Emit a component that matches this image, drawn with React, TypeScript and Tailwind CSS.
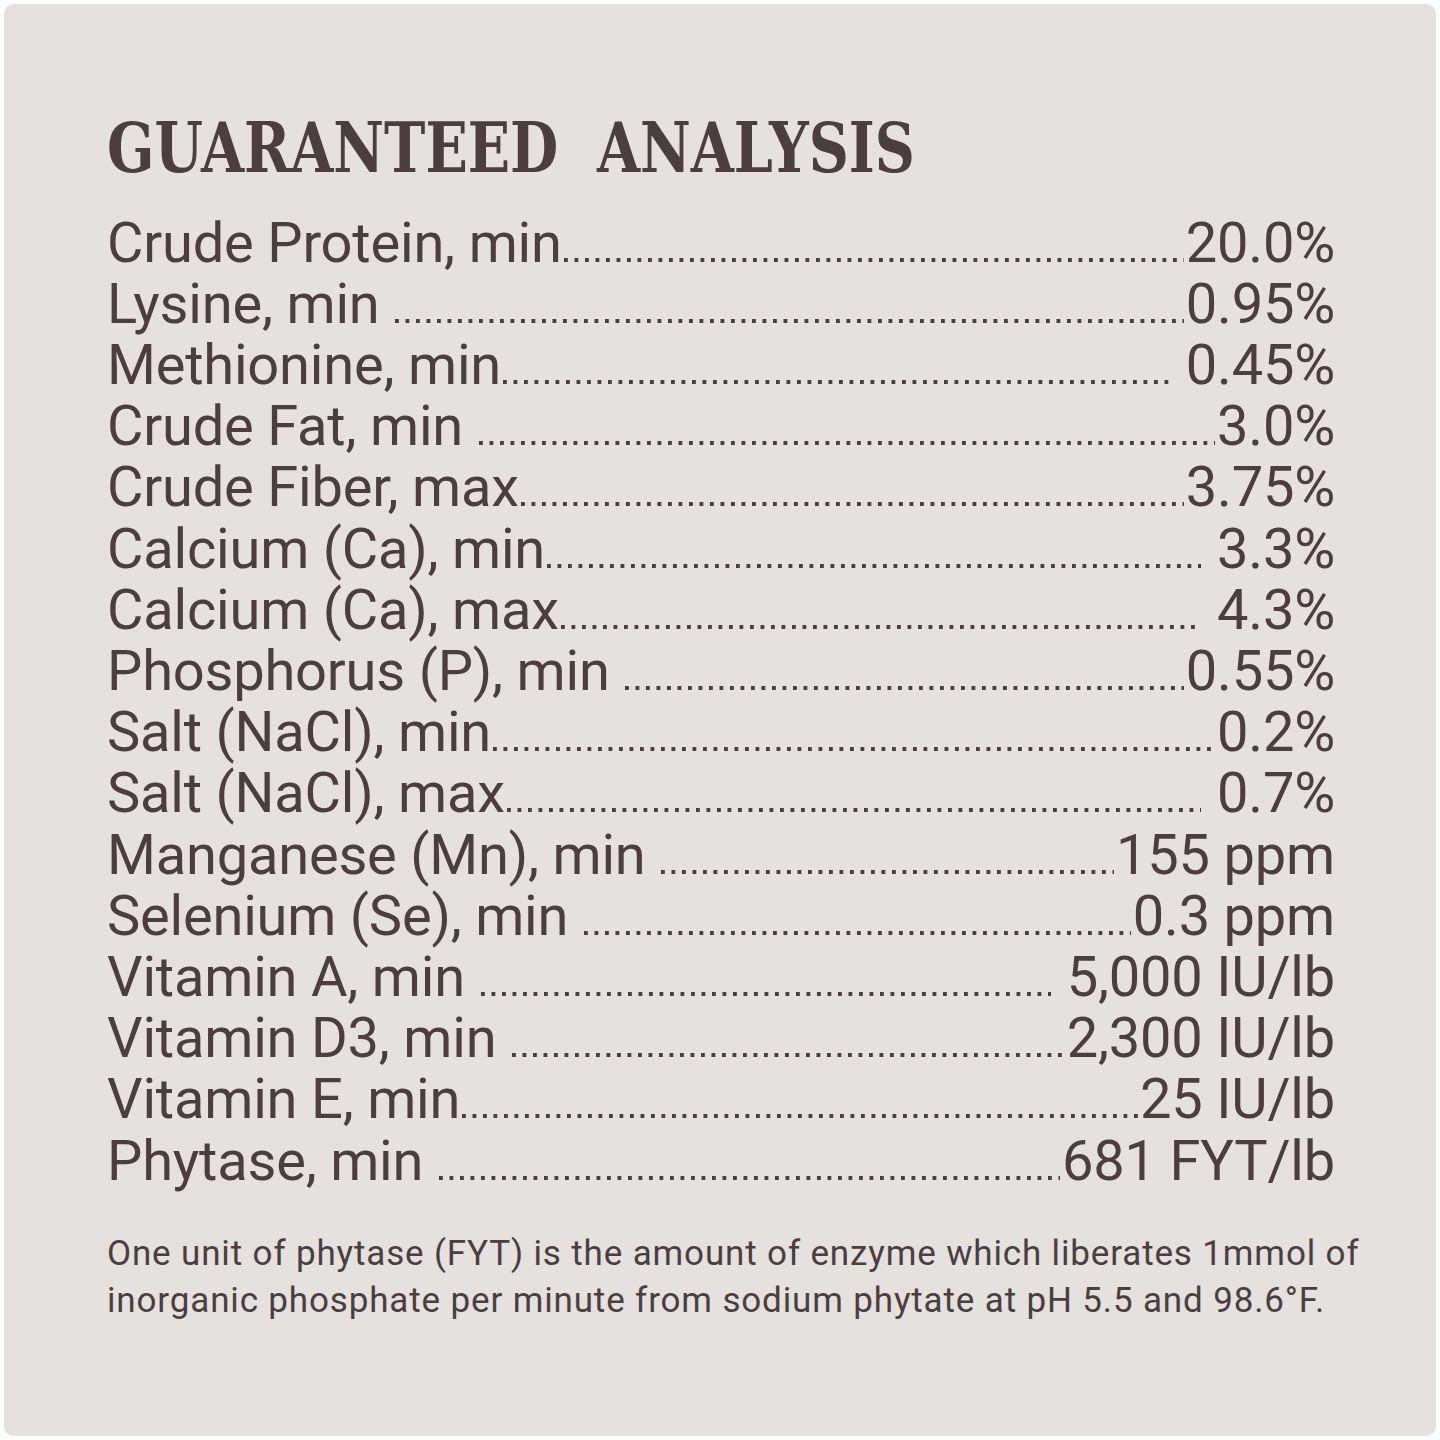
const rows: [string, string][] = [
  ['Crude Protein, min', '20.0%'],
  ['Lysine, min ', '0.95%'],
  ['Methionine, min', ' 0.45%'],
  ['Crude Fat, min ', '3.0%'],
  ['Crude Fiber, max', '3.75%'],
  ['Calcium (Ca), min', ' 3.3%'],
  ['Calcium (Ca), max', ' 4.3%'],
  ['Phosphorus (P), min ', '0.55%'],
  ['Salt (NaCl), min', '0.2%'],
  ['Salt (NaCl), max', ' 0.7%'],
  ['Manganese (Mn), min ', '155 ppm'],
  ['Selenium (Se), min ', '0.3 ppm'],
  ['Vitamin A, min ', ' 5,000 IU/lb'],
  ['Vitamin D3, min ', '2,300 IU/lb'],
  ['Vitamin E, min', '25 IU/lb'],
  ['Phytase, min ', '681 FYT/lb'],
];

function Row({ label, value }: { label: string; value: string }) {
  return (
    <div className="flex items-baseline whitespace-pre">
      <span>{label}</span>
      <div className="flex-1 h-[4px] mb-[5px] mx-[2px] bg-[image:linear-gradient(to_right,#4b3e3f_3.5px,transparent_3.5px)] bg-[length:10.5px_4px] bg-repeat-x" />
      <span>{value}</span>
    </div>
  );
}

export default function App() {
  return (
    <div className="w-[1440px] h-[1440px] bg-white p-[4px]">
      <div className="h-full rounded-[10px] bg-[#e4e1de] pl-[103px] pr-[101px] pt-[110px] text-[#4b3e3f]">
        <h1 className="font-['DejaVu_Serif_Condensed','DejaVu_Serif',serif] font-bold text-[68.6px] leading-none whitespace-pre origin-left scale-x-[0.9]">
          GUARANTEED  ANALYSIS
        </h1>
        <div className="mt-[30px] font-['Roboto',sans-serif] text-[56px] leading-[61.2px] tracking-[-0.2px]">
          {rows.map(([label, value]) => (
            <Row key={label} label={label} value={value} />
          ))}
        </div>
        <p className="mt-[38px] font-['Roboto',sans-serif] text-[35px] leading-[47px] tracking-[0.85px] whitespace-nowrap">
          One unit of phytase (FYT) is the amount of enzyme which liberates 1mmol of
          <br />
          inorganic phosphate per minute from sodium phytate at pH 5.5 and 98.6°F.
        </p>
      </div>
    </div>
  );
}
